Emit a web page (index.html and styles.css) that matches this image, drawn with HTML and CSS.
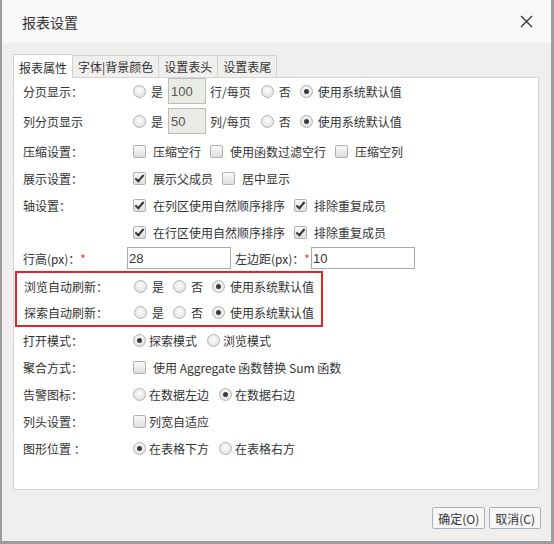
FILE: index.html
```html
<!DOCTYPE html>
<html lang="zh-CN">
<head>
  <meta charset="UTF-8">
  <title>报表设置</title>
  <link rel="stylesheet" href="styles.css">
</head>
<body>

<div class="dialog">
  <div class="dlg-head">
    <span class="dlg-title">报表设置</span>
    <svg class="dlg-close" width="13" height="13" viewBox="0 0 13 13">
      <path d="M1 1 L12 12 M12 1 L1 12" stroke="#333" stroke-width="1.3" fill="none"/>
    </svg>
  </div>

  <div class="dlg-body">
    <div class="tabs">
      <span class="tab active">报表属性</span>
      <span class="tab">字体|背景颜色</span>
      <span class="tab">设置表头</span>
      <span class="tab">设置表尾</span>
    </div>

    <div class="panel">
      <!-- 分页 -->
      <div class="row row-input">
        <span class="lbl">分页显示：</span>
        <span class="opt"><i class="rd"></i>是</span>
        <input class="num dis" type="text" value="100" disabled>
        <span class="unit">行/每页</span>
        <span class="opt"><i class="rd"></i>否</span>
        <span class="opt"><i class="rd on"></i>使用系统默认值</span>
      </div>
      <div class="row row-input">
        <span class="lbl">列分页显示</span>
        <span class="opt"><i class="rd"></i>是</span>
        <input class="num dis" type="text" value="50" disabled>
        <span class="unit">列/每页</span>
        <span class="opt"><i class="rd"></i>否</span>
        <span class="opt"><i class="rd on"></i>使用系统默认值</span>
      </div>

      <div class="row">
        <span class="lbl">压缩设置：</span>
        <span class="opt cbx"><i class="cb"></i>压缩空行</span>
        <span class="opt cbx"><i class="cb"></i>使用函数过滤空行</span>
        <span class="opt cbx"><i class="cb"></i>压缩空列</span>
      </div>
      <div class="row">
        <span class="lbl">展示设置：</span>
        <span class="opt cbx"><i class="cb on"></i>展示父成员</span>
        <span class="opt cbx"><i class="cb"></i>居中显示</span>
      </div>
      <div class="row">
        <span class="lbl">轴设置：</span>
        <span class="opt cbx"><i class="cb on"></i>在列区使用自然顺序排序</span>
        <span class="opt cbx"><i class="cb on"></i>排除重复成员</span>
      </div>
      <div class="row">
        <span class="lbl"></span>
        <span class="opt cbx"><i class="cb on"></i>在行区使用自然顺序排序</span>
        <span class="opt cbx"><i class="cb on"></i>排除重复成员</span>
      </div>

      <div class="row row-size">
        <span class="lbl lbl-short">行高(px)：<em>*</em></span>
        <input class="txt" type="text" value="28">
        <span class="lbl-mid">左边距(px)：<em>*</em></span>
        <input class="txt" type="text" value="10">
      </div>

      <div class="mark">
        <div class="row row-mark">
          <span class="lbl">浏览自动刷新：</span>
          <span class="opt"><i class="rd"></i>是</span>
          <span class="opt"><i class="rd"></i>否</span>
          <span class="opt"><i class="rd on"></i>使用系统默认值</span>
        </div>
        <div class="row row-mark">
          <span class="lbl">探索自动刷新：</span>
          <span class="opt"><i class="rd"></i>是</span>
          <span class="opt"><i class="rd"></i>否</span>
          <span class="opt"><i class="rd on"></i>使用系统默认值</span>
        </div>
      </div>

      <div class="row">
        <span class="lbl">打开模式：</span>
        <span class="opt tight"><i class="rd on"></i>探索模式</span>
        <span class="opt tight"><i class="rd"></i>浏览模式</span>
      </div>
      <div class="row">
        <span class="lbl">聚合方式：</span>
        <span class="opt cbx"><i class="cb"></i>使用 Aggregate 函数替换 Sum 函数</span>
      </div>
      <div class="row">
        <span class="lbl">告警图标：</span>
        <span class="opt tight"><i class="rd"></i>在数据左边</span>
        <span class="opt tight"><i class="rd on"></i>在数据右边</span>
      </div>
      <div class="row">
        <span class="lbl">列头设置：</span>
        <span class="opt tight"><i class="cb"></i>列宽自适应</span>
      </div>
      <div class="row">
        <span class="lbl">图形位置 ：</span>
        <span class="opt tight"><i class="rd on"></i>在表格下方</span>
        <span class="opt tight"><i class="rd"></i>在表格右方</span>
      </div>
    </div>

    <div class="dlg-foot">
      <button>确定(O)</button>
      <button>取消(C)</button>
    </div>
  </div>
</div>

</body>
</html>
```

FILE: styles.css
```css
html {
  background: #9d9d9d;
}

body {
  margin: 0;
  font-family: "Noto Sans CJK SC", sans-serif;
  font-size: 12px;
  color: #333;
}

.dialog {
  margin-left: 2px;
  width: 549px;
  height: 541px;
  background: #f0efee;
}

.dlg-head {
  height: 43px;
  background: #f8f8f8;
  display: flex;
  align-items: center;
  justify-content: space-between;
  padding: 0 18px 0 20px;
}

.dlg-title {
  font-size: 14px;
  color: #333;
}

.dlg-body {
  padding: 0 12px 0 11px;
}

/* 选项卡 */
.tabs {
  display: flex;
  align-items: flex-end;
  height: 34px;
}

.tab {
  height: 21px;
  line-height: 21px;
  padding: 0 5px;
  border: 1px solid #d2d2d2;
  border-bottom: none;
  margin-right: -1px;
  background: #f0efee;
  color: #333;
}

.tab.active {
  height: 23px;
  line-height: 25px;
  background: #fff;
  position: relative;
  z-index: 1;
  margin-bottom: -1px;
}

.panel {
  background: #fff;
  border: 1px solid #d6d6d6;
  height: 411px;
  padding-left: 9px;
}

.row {
  display: flex;
  align-items: center;
  height: 27px;
  white-space: nowrap;
}

.row-input {
  height: 26px;
  margin-bottom: 4px;
}

.row-size {
  height: 24px;
}

.lbl {
  width: 110px;
  flex: none;
}

.lbl-short {
  width: 104px;
}

.lbl em, .lbl-mid em {
  color: #f33;
  font-style: normal;
}

.lbl-mid {
  margin: 0 1px 0 4px;
}

.opt {
  display: inline-flex;
  align-items: center;
  margin-right: 9px;
}

.opt.tight {
  margin-right: 10px;
}

/* 单选框 */
.rd {
  width: 11px;
  height: 11px;
  border: 1px solid #b3b3b3;
  border-radius: 50%;
  background: radial-gradient(circle at 50% 40%, #fdfdfd 0%, #e9e9e9 60%, #d8d8d8 100%);
  margin-right: 5px;
  position: relative;
  flex: none;
}

.tight .rd {
  margin-right: 3px;
}

.rd.on::after {
  content: "";
  position: absolute;
  left: 3px;
  top: 3px;
  width: 5px;
  height: 5px;
  border-radius: 50%;
  background: #3a3a3a;
}

/* 复选框 */
.cb {
  width: 11px;
  height: 11px;
  border: 1px solid #b0b0b0;
  border-radius: 2px;
  background: linear-gradient(#fafafa, #dedede);
  margin-right: 7px;
  position: relative;
  flex: none;
}

.tight .cb {
  margin-right: 3px;
}

.cb.on::after {
  content: "";
  position: absolute;
  left: 3px;
  top: 0;
  width: 3px;
  height: 7px;
  border: solid #333;
  border-width: 0 2px 2px 0;
  transform: rotate(40deg);
}

/* 输入框 */
.num {
  box-sizing: border-box;
  width: 38px;
  height: 26px;
  margin: 0 4px 0 -4px;
  padding: 0 2px;
  border: 1px solid #bdbdbd;
  background: #ebebe6;
  color: #555;
  font-family: "Liberation Sans", sans-serif;
  font-size: 13px;
}

.unit {
  margin-right: 10px;
}

.txt {
  box-sizing: border-box;
  width: 104px;
  height: 22px;
  padding: 0 1px;
  border: 1px solid #a9a9a9;
  background: #fff;
  color: #333;
  font-family: "Liberation Sans", sans-serif;
  font-size: 13px;
}

.mark {
  width: 304px;
  margin: 1px 0 0 -8px;
  border: 2px solid #e3222b;
}

.row-mark {
  height: 26px;
  padding-left: 7px;
}

.dlg-foot {
  display: flex;
  justify-content: flex-end;
  gap: 4px;
  margin: 17px -2px 0 0;
}

button {
  height: 22px;
  padding: 0 5px;
  border: 1px solid #a9b1ba;
  border-radius: 2px;
  background: #f7f7f7;
  color: #333;
  font-family: "Noto Sans CJK SC", sans-serif;
  font-size: 12px;
}
```
